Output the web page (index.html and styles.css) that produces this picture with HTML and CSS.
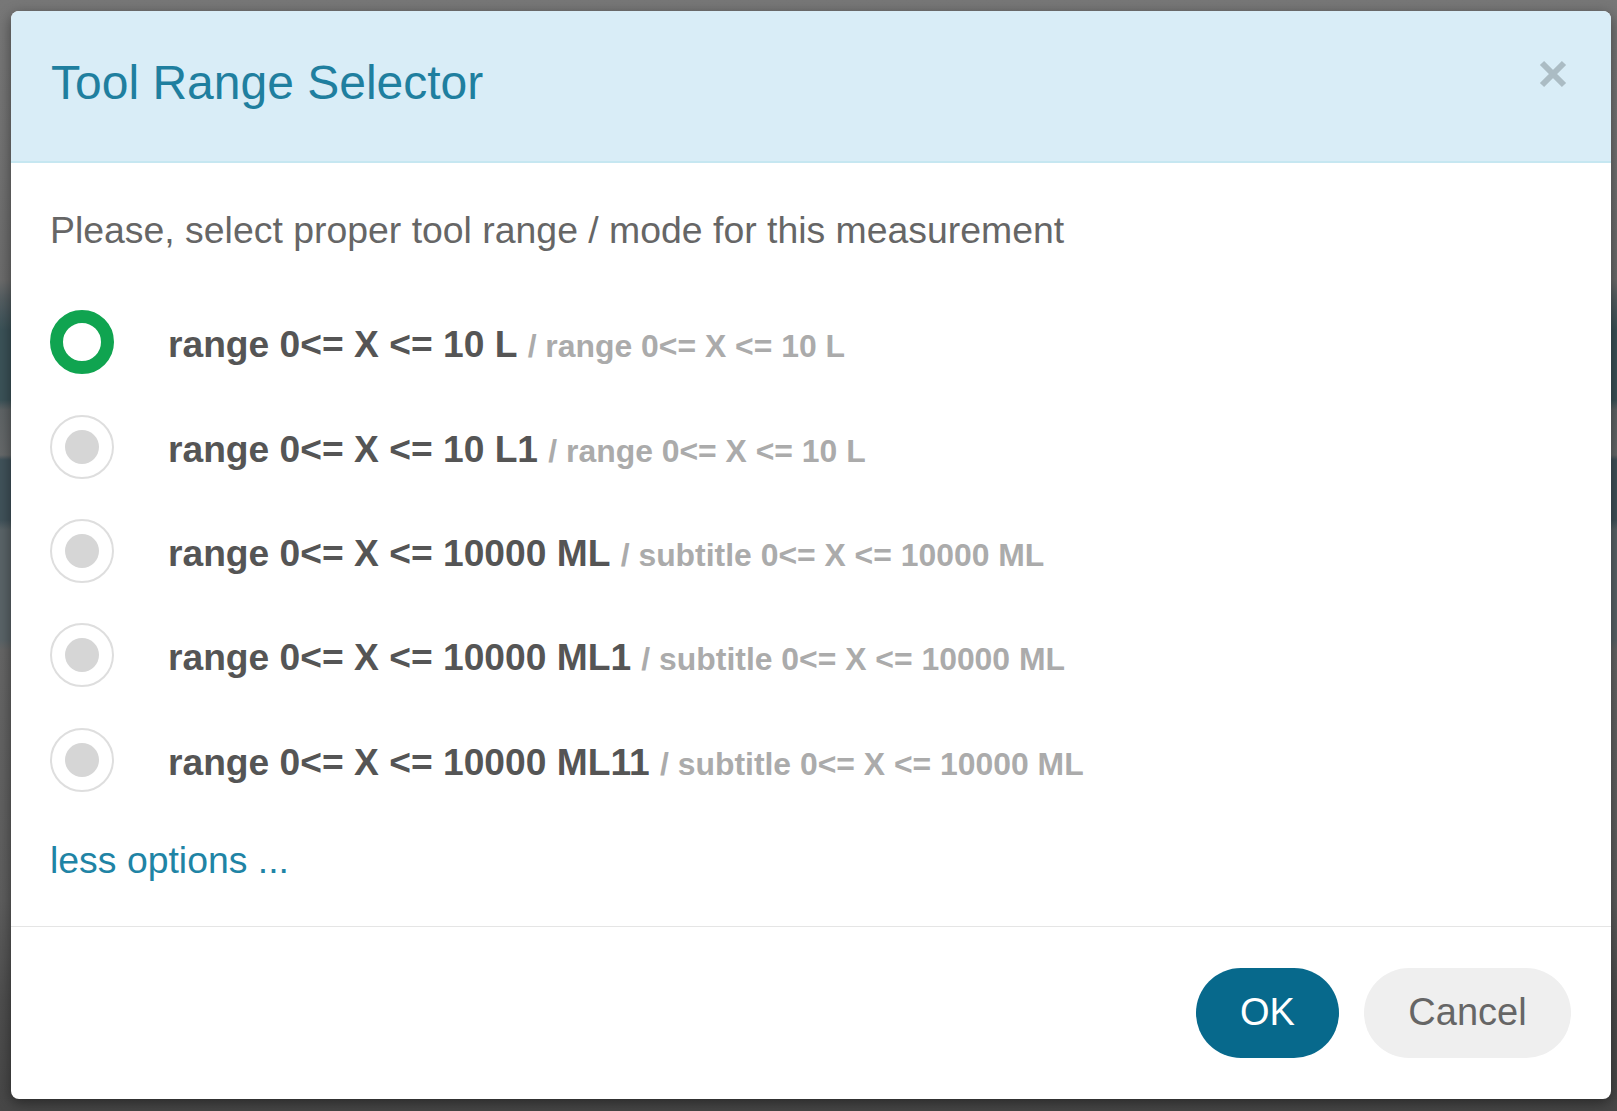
FILE: index.html
```html
<!DOCTYPE html>
<html lang="en">
<head>
<meta charset="utf-8">
<title>Tool Range Selector</title>
<link rel="stylesheet" href="styles.css">
</head>
<body>
<div class="backdrop">
  <div class="modal">
    <div class="modal-header">
      <h4 class="modal-title">Tool Range Selector</h4>
      <button class="close" aria-label="Close">
        <svg width="28" height="28" viewBox="0 0 28 28"><path d="M3 3 L25 25 M25 3 L3 25" stroke="currentColor" stroke-width="6" stroke-linecap="butt"/></svg>
      </button>
    </div>
    <div class="modal-body">
      <p class="intro">Please, select proper tool range / mode for this measurement</p>
      <ul class="options">
        <li class="option selected"><span class="radio"></span><span class="text"><span class="label">range 0&lt;= X &lt;= 10 L</span> <span class="sub">/ range 0&lt;= X &lt;= 10 L</span></span></li>
        <li class="option"><span class="radio"></span><span class="text"><span class="label">range 0&lt;= X &lt;= 10 L1</span> <span class="sub">/ range 0&lt;= X &lt;= 10 L</span></span></li>
        <li class="option"><span class="radio"></span><span class="text"><span class="label">range 0&lt;= X &lt;= 10000 ML</span> <span class="sub">/ subtitle 0&lt;= X &lt;= 10000 ML</span></span></li>
        <li class="option"><span class="radio"></span><span class="text"><span class="label">range 0&lt;= X &lt;= 10000 ML1</span> <span class="sub">/ subtitle 0&lt;= X &lt;= 10000 ML</span></span></li>
        <li class="option"><span class="radio"></span><span class="text"><span class="label">range 0&lt;= X &lt;= 10000 ML11</span> <span class="sub">/ subtitle 0&lt;= X &lt;= 10000 ML</span></span></li>
      </ul>
      <a class="more" href="#">less options ...</a>
    </div>
    <div class="modal-footer">
      <button class="btn btn-ok">OK</button>
      <button class="btn btn-cancel">Cancel</button>
    </div>
  </div>
</div>
</body>
</html>
```
FILE: styles.css
```css
html, body {
  margin: 0;
  padding: 0;
  height: 100%;
}
body {
  font-family: "Liberation Sans", Arial, sans-serif;
  background: linear-gradient(to bottom,
    #777 0px, #737373 130px, #6c6c6c 280px,
    #545e62 300px, #3b5258 330px, #3b5258 400px,
    #5f6466 410px, #66696a 455px,
    #40525a 460px, #40525a 520px,
    #5a6468 530px, #5a6468 640px,
    #666 650px, #5e5e5e 900px, #4e4e4e 1000px, #474747 1111px);
}
.backdrop {
  box-sizing: border-box;
  height: 1111px;
  padding: 11px 6px 12px 11px;
  display: flex;
}
.modal {
  flex: 1;
  display: flex;
  flex-direction: column;
  background: #fff;
  border-radius: 8px;
  overflow: hidden;
  box-shadow: 0 4px 14px rgba(0, 0, 0, 0.45);
}
.modal-header {
  display: flex;
  align-items: flex-start;
  justify-content: space-between;
  background: #d9edf7;
  border-bottom: 2px solid #c6e7f1;
  height: 150px;
  padding: 0 44px 0 40px;
}
.modal-title {
  margin: 0;
  padding-top: 46px;
  font-size: 48px;
  line-height: 52px;
  font-weight: normal;
  color: #1f7f9f;
}
.close {
  margin-top: 49px;
  padding: 0;
  border: 0;
  background: none;
  color: #abbcc4;
  width: 28px;
  height: 28px;
  display: block;
}
.close svg { display: block; }
.modal-body {
  padding: 41px 39px 41px 39px;
  display: flex;
  flex-direction: column;
  align-items: flex-start;
}
.intro {
  margin: 0;
  font-size: 37.4px;
  line-height: 52px;
  color: #666;
}
.options {
  list-style: none;
  margin: 34px 0 0 0;
  padding: 0;
  display: flex;
  flex-direction: column;
}
.option {
  display: flex;
  align-items: center;
  height: 104.4px;
  white-space: nowrap;
}
.radio {
  box-sizing: border-box;
  width: 64px;
  height: 64px;
  margin-left: 0;
  margin-right: 54px;
  border-radius: 50%;
  border: 2px solid #dedede;
  display: flex;
  align-items: center;
  justify-content: center;
  flex: none;
}
.radio::after {
  content: "";
  width: 34px;
  height: 34px;
  border-radius: 50%;
  background: #d6d6d6;
}
.option.selected .radio {
  border: 13px solid #10a450;
}
.option.selected .radio::after {
  display: none;
}
.text {
  font-size: 37px;
  line-height: 50px;
  padding-top: 6px;
}
.label {
  font-weight: 700;
  font-size: 37.2px;
  color: #555;
}
.sub {
  font-weight: 700;
  font-size: 31.9px;
  color: #ababab;
}
.more {
  margin-top: 23px;
  font-size: 37.4px;
  line-height: 50px;
  color: #1f84a5;
  text-decoration: none;
}
.modal-footer {
  border-top: 1px solid #e5e5e5;
  padding: 41px 40px 40px 39px;
  display: flex;
  justify-content: flex-end;
  gap: 25px;
}
.btn {
  font-family: "Liberation Sans", Arial, sans-serif;
  font-size: 38px;
  height: 90px;
  border: 0;
  border-radius: 45px;
  padding: 0;
}
.btn-ok {
  width: 143px;
  background: #07698c;
  color: #fff;
}
.btn-cancel {
  width: 207px;
  background: #efefef;
  color: #666;
}
```
